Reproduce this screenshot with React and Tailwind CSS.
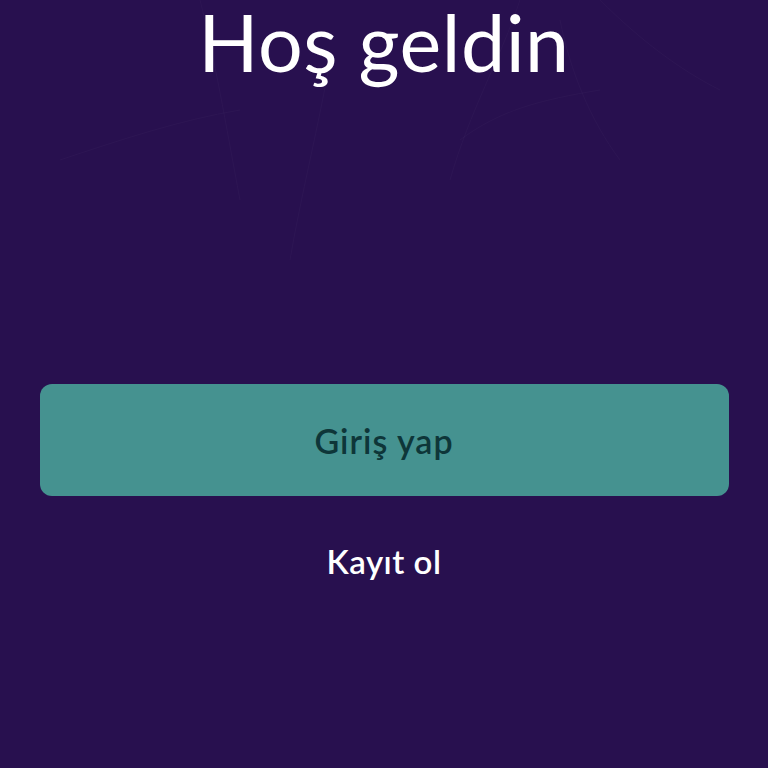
export default function App() {
  return (
    <div
      className="relative h-[768px] w-[768px] overflow-hidden bg-[#28104f]"
      style={{ fontFamily: 'Lato, "Noto Sans", sans-serif' }}
    >
      {/* faint decorative lines behind the heading */}
      <svg
        className="pointer-events-none absolute inset-0"
        width="768"
        height="768"
        viewBox="0 0 768 768"
        fill="none"
      >
        <g stroke="#ffffff" strokeOpacity="0.025" strokeWidth="1">
          <path d="M200 0 C215 60 225 120 240 200" />
          <path d="M330 60 C320 120 300 200 290 260" />
          <path d="M520 0 C500 60 470 110 450 180" />
          <path d="M600 0 C640 40 680 70 720 90" />
          <path d="M560 20 C570 70 590 120 620 160" />
          <path d="M60 160 C120 140 180 120 240 110" />
          <path d="M460 140 C500 110 540 100 600 90" />
        </g>
      </svg>

      <div className="relative flex h-full flex-col items-center">
        <h1 className="pt-[2px] text-[79px] font-normal leading-none tracking-[0.5px] text-white">
          Hoş geldin
        </h1>

        <button
          type="button"
          className="mt-[303px] flex h-[112px] w-[689px] items-center justify-center rounded-[12px] bg-[#459290] text-[34px] font-semibold tracking-[1px] text-[#0e3639]"
        >
          Giriş yap
        </button>

        <button
          type="button"
          className="mt-[41px] text-[33px] font-semibold tracking-[0.5px] text-white"
        >
          Kayıt ol
        </button>
      </div>
    </div>
  )
}
